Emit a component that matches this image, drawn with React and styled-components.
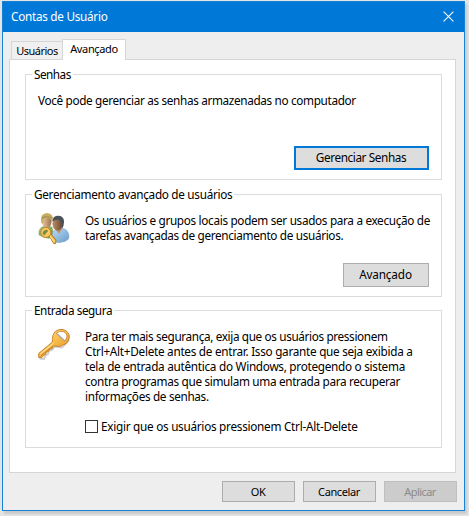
import React from 'react';
import styled, { createGlobalStyle } from 'styled-components';

const GlobalStyle = createGlobalStyle`
  * { box-sizing: border-box; }
  body {
    margin: 0;
    background: #fff;
    font-family: "Noto Sans", "Open Sans", sans-serif;
    overflow: hidden;
  }
`;

const Desktop = styled.main`
  width: 469px;
  height: 516px;
  padding: 1px 0 0 2px;
`;

const Window = styled.section`
  display: flex;
  flex-direction: column;
  width: 463px;
  height: 510px;
  border: 1px solid #1583d8;
  background: #eee;
  box-shadow: 2px 3px 2px 0 #c9c9c9, 1px 2px 0 3px #e4e4e4;
`;

const Text = styled.span`
  display: block;
  font-size: ${({ $small }) => ($small ? 11 : 11.75)}px;
  line-height: 15px;
  letter-spacing: ${({ $track }) => $track}px;
  white-space: nowrap;
`;

const TitleBar = styled.header`
  display: flex;
  align-items: center;
  justify-content: space-between;
  flex: none;
  height: 30px;
  padding: 0 10px 1px 8px;
  background: #0078d7;
  color: #fff;
`;

const CloseButton = styled.button`
  display: flex;
  padding: 0;
  border: 0;
  background: none;
`;

const TabStrip = styled.nav`
  display: flex;
  align-items: flex-end;
  height: 28px;
  margin-bottom: -1px;
  padding-left: 8px;
`;

const Tab = styled.button`
  position: relative;
  display: flex;
  justify-content: center;
  width: ${({ $active }) => ($active ? 64 : 52)}px;
  height: ${({ $active }) => ($active ? 21 : 19)}px;
  margin-left: ${({ $active }) => ($active ? -1 : 0)}px;
  padding: 1px 0 0;
  border: 1px solid #d6d6d6;
  border-bottom: ${({ $active }) => ($active ? '0' : '1px solid #d6d6d6')};
  background: ${({ $active }) => ($active ? '#fff' : '#f0f0f0')};
  color: #000;
  font-family: inherit;
`;

const Panel = styled.div`
  display: flex;
  flex-direction: column;
  width: 447px;
  height: 414px;
  margin-left: 6px;
  padding: 14px 14px 0 15px;
  border: 1px solid #d6d6d6;
  background: #fff;
`;

const Group = styled.section`
  display: flex;
  flex-direction: column;
  flex: none;
  width: 417px;
  height: ${({ $height }) => $height}px;
  margin-bottom: ${({ $gap }) => $gap}px;
  border: 1px solid #dcdcdc;
`;

const Legend = styled.h2`
  align-self: flex-start;
  height: 15px;
  margin: -8px 0 0 6px;
  padding: 0 2px;
  background: #fff;
  font-weight: 400;
`;

const Message = styled.div`
  padding: 11px 0 0 12px;
`;

const IconRow = styled.div`
  display: grid;
  grid-template-columns: 34px 1fr;
  column-gap: 13px;
  padding: 11px 0 0 12px;
`;

const Lines = styled.div`
  display: flex;
  flex-direction: column;
`;

const Actions = styled.div`
  display: flex;
  justify-content: flex-end;
  margin-top: auto;
  padding: 0 12px 9px 0;
`;

const Footer = styled.footer`
  display: flex;
  justify-content: flex-end;
  gap: 8px;
  padding: 8px 7px 0 0;
`;

const Button = styled.button`
  display: flex;
  align-items: center;
  justify-content: center;
  width: ${({ $width }) => $width}px;
  height: ${({ $height }) => $height}px;
  padding: 0 1px 1px 0;
  border: ${({ $focused }) => ($focused ? '2px solid #0078d7' : '1px solid #adadad')};
  background: #ddd;
  color: #000;
  font-family: inherit;

  &:disabled {
    border-color: #bfbfbf;
    background: #ccc;
    color: #8b8b8b;
  }
`;

const CheckLabel = styled.label`
  display: flex;
  align-items: center;
  gap: 3px;
  margin-top: 15px;
`;

const CheckBox = styled.input`
  appearance: none;
  width: 13px;
  height: 13px;
  margin: 0;
  border: 1px solid #333;
  background: #fff;
`;

function CloseIcon() {
  return (
    <svg width="11" height="11" viewBox="0 0 11 11" stroke="#fff" strokeWidth="1.1">
      <path d="M.6.6 10.4 10.4M10.4.6.6 10.4" />
    </svg>
  );
}

function UsersIcon() {
  return (
    <svg width="34" height="34" viewBox="0 1 34 34">
      <defs>
        <linearGradient id="face" x2="1">
          <stop stopColor="#edc9a0" />
          <stop offset="1" stopColor="#9a704d" />
        </linearGradient>
        <linearGradient id="face2" x2="1">
          <stop stopColor="#bd8f6a" />
          <stop offset="1" stopColor="#68452f" />
        </linearGradient>
        <linearGradient id="green" x2="1" y2="1">
          <stop stopColor="#a8cd82" />
          <stop offset="1" stopColor="#568a3c" />
        </linearGradient>
        <linearGradient id="blue" x2="1" y2="1">
          <stop stopColor="#c1dbef" />
          <stop offset="1" stopColor="#659ccc" />
        </linearGradient>
      </defs>
      <path d="M1 23q-1-7 5-9l8 1 2 10q-7 3-15-2Z" fill="url(#green)" stroke="#7da564" strokeWidth=".5" />
      <ellipse cx="8.8" cy="9.8" rx="4.7" ry="6.2" fill="url(#face)" />
      <path d="M3.4 11Q1.6 1.7 8.5 1q6.2.2 6.3 5.8L13.8 10 12.4 6.8Q8 5 5.6 7.2L5 12Z" fill="#c7ac62" />
      <path d="M4 6Q8 3.4 14.5 6" fill="none" stroke="#9b8c50" strokeWidth="1.1" />
      <path d="M14 28.5q-1-9 4-11.4l6-.8q6.5 1.4 7 7.7l-.5 3q-3 3-8.5 3.5-5 .4-8-2Z" fill="url(#blue)" stroke="#79a9cf" strokeWidth=".6" />
      <path d="m17 17 4 4.5 3.4-5-.5-3-6-.1Z" fill="#b8906c" />
      <ellipse cx="19.5" cy="11.8" rx="5.1" ry="6.8" fill="url(#face2)" />
      <path d="M14.3 9.5Q14.7 4 19.5 3.7q6.3-.2 6.6 5.8-.2 5-2 7.1l-1-5.4-1.6-3.2q-4-.7-7.2 1.5Z" fill="#4a5259" />
      <path d="m10.5 22.5 2-1.2 5.5 7-.5 3.4-2-.5Z" fill="#f5b73f" stroke="#a66716" strokeWidth=".8" />
      <circle cx="7.8" cy="20.4" r="5" fill="#f8cb63" stroke="#c88224" strokeWidth="1" />
      <path d="M4.9 20.9q.7-3.2 4-3l1 1-3.5 4q-1.7-.2-1.5-2Z" fill="#629348" stroke="#b68030" strokeWidth=".6" />
      <path d="m12 24 4.5 6" stroke="#ffe07f" strokeWidth="1.3" />
    </svg>
  );
}

function KeyIcon() {
  return (
    <svg width="34" height="34" viewBox="0 1 34 34">
      <defs>
        <linearGradient id="gold" x2=".7" y2="1">
          <stop stopColor="#ffe59b" />
          <stop offset=".5" stopColor="#f8bf4b" />
          <stop offset="1" stopColor="#e89427" />
        </linearGradient>
      </defs>
      <path d="M1.5 30.5 6 31l2-4 2-1 1-3 3-1 3-3.5 7 1 6.5-6.4.8-6.6" fill="none" stroke="#9b9ca0" strokeWidth="1.8" opacity=".5" />
      <path
        d="M.7 25.4 14.4 14Q13.8 7 17.4 3.3 20.6.9 25 1.5q6.5 1.8 6.1 8.2-1 6-6.6 7.4l-2.3 1.3-6.8-.4-1.6 3-2.4.2-1.1 2.5-2 .4-.8 2.6-1.8.5-1.8 2.4-3.2-.1Z"
        fill="url(#gold)" stroke="#c77d24" strokeWidth=".9" strokeLinejoin="round"
      />
      <path d="M18.4 5.3q2.8-3.1 6.9-1.8 4.7 2 3.4 6.5l-1.8 3Z" fill="#fff" stroke="#c88433" strokeWidth=".9" />
      <path d="m19 5.7 7.4 7" stroke="#a8abb0" strokeWidth="1.3" />
      <path d="m2.2 26.1 13.4-11" stroke="#fff0ae" strokeWidth="1" />
      <path d="m2.8 28.1 12.1-10" stroke="#c27b22" strokeWidth=".9" />
    </svg>
  );
}

export default function App() {
  return (
    <>
      <GlobalStyle />
      <Desktop>
        <Window>
          <TitleBar>
            <Text $track={-0.28}>Contas de Usuário</Text>
            <CloseButton aria-label="Fechar"><CloseIcon /></CloseButton>
          </TitleBar>
          <TabStrip>
            <Tab><Text $small $track={-0.5}>Usuários</Text></Tab>
            <Tab $active><Text $small $track={-0.35}>Avançado</Text></Tab>
          </TabStrip>
          <Panel>
            <Group $height={106} $gap={14}>
              <Legend><Text $track={-0.5}>Senhas</Text></Legend>
              <Message>
                <Text $track={-0.34}>Você pode gerenciar as senhas armazenadas no computador</Text>
              </Message>
              <Actions>
                <Button $focused $width={135} $height={24}>
                  <Text $track={-0.39}>Gerenciar Senhas</Text>
                </Button>
              </Actions>
            </Group>
            <Group $height={103} $gap={13}>
              <Legend><Text $track={-0.3}>Gerenciamento avançado de usuários</Text></Legend>
              <IconRow>
                <UsersIcon />
                <Lines>
                  <Text $track={-0.32}>Os usuários e grupos locais podem ser usados para a execução de</Text>
                  <Text $track={-0.33}>tarefas avançadas de gerenciamento de usuários.</Text>
                </Lines>
              </IconRow>
              <Actions>
                <Button $width={86} $height={24}><Text $track={-0.15}>Avançado</Text></Button>
              </Actions>
            </Group>
            <Group $height={138} $gap={0}>
              <Legend><Text $track={-0.43}>Entrada segura</Text></Legend>
              <IconRow>
                <KeyIcon />
                <Lines>
                  <Text $track={-0.36}>Para ter mais segurança, exija que os usuários pressionem</Text>
                  <Text $track={-0.28}>Ctrl+Alt+Delete antes de entrar. Isso garante que seja exibida a</Text>
                  <Text $track={-0.28}>tela de entrada autêntica do Windows, protegendo o sistema</Text>
                  <Text $track={-0.33}>contra programas que simulam uma entrada para recuperar</Text>
                  <Text $track={-0.33}>informações de senhas.</Text>
                  <CheckLabel>
                    <CheckBox type="checkbox" />
                    <Text $track={-0.27}>Exigir que os usuários pressionem Ctrl-Alt-Delete</Text>
                  </CheckLabel>
                </Lines>
              </IconRow>
            </Group>
          </Panel>
          <Footer>
            <Button $width={73} $height={21}><Text $small $track={-0.5}>OK</Text></Button>
            <Button $width={73} $height={21}><Text $small $track={-0.4}>Cancelar</Text></Button>
            <Button $width={73} $height={21} disabled><Text $small $track={-0.57}>Aplicar</Text></Button>
          </Footer>
        </Window>
      </Desktop>
    </>
  );
}
